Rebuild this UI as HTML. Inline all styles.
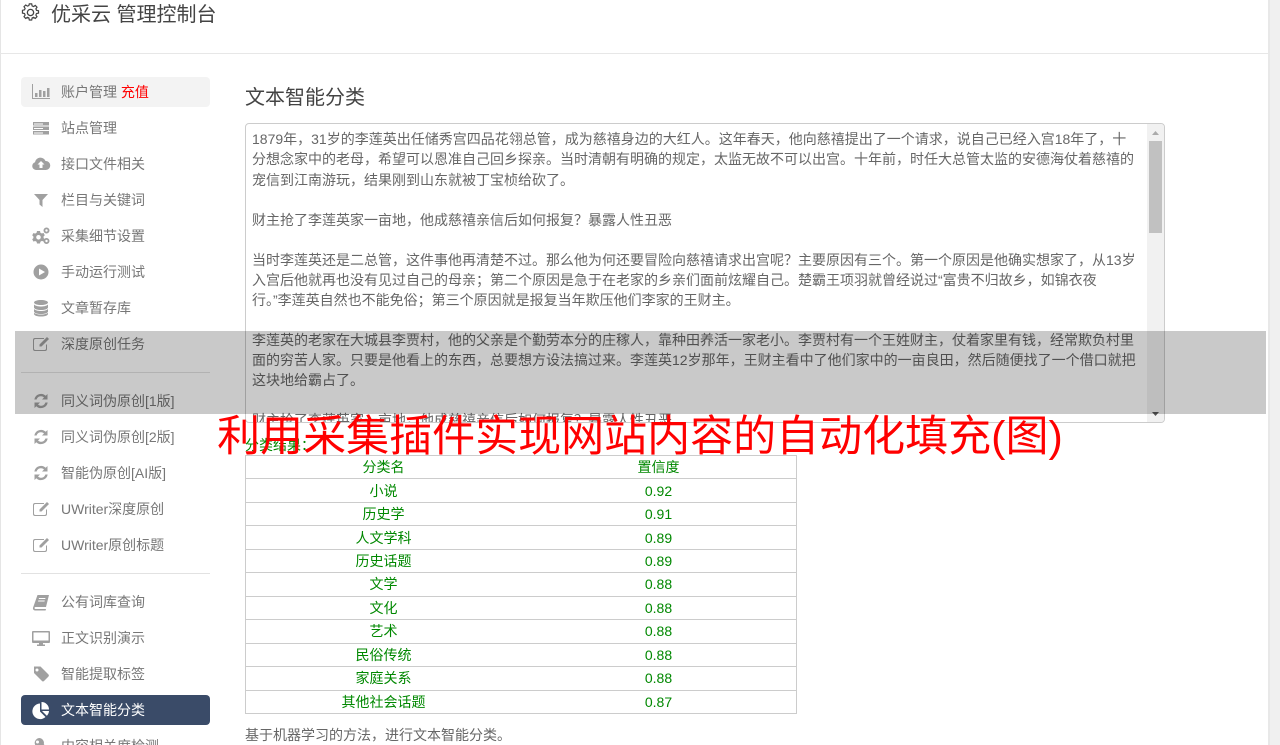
<!DOCTYPE html>
<html lang="zh"><head><meta charset="utf-8"><title>优采云 管理控制台</title>
<style>
*{box-sizing:border-box}
html,body{margin:0;padding:0;width:1280px;height:745px;overflow:hidden;background:#fff}
body{position:relative;font-family:"Liberation Sans","WenQuanYi Zen Hei","Noto Sans CJK TC",sans-serif;font-size:14px;color:#666}
.a{position:absolute;white-space:nowrap}
.it{position:absolute;left:21px;width:189px;height:30px;line-height:30px;padding-left:40px;color:#777;border-radius:4px;white-space:nowrap}
.it svg{position:absolute;left:10px;top:5px;width:20px;height:20px;fill:#a0a0a0}
.on{background:#3a4b68;color:#fff}
.on svg{fill:#fff}
.hv{background:#f3f3f3}
.dv{position:absolute;left:21px;width:189px;height:1px;background:#e2e2e2}
.ta{position:absolute;left:245px;top:123px;width:920px;height:300px;border:1px solid #ccc;border-radius:4px;overflow:hidden;background:#fff}
.ta div{position:absolute;left:6px;white-space:nowrap;line-height:20px;height:20px;color:#666}
table{position:absolute;left:245px;top:455px;width:552px;height:259px;border-collapse:collapse;color:#080;table-layout:fixed;border:1px solid #ccc}
td{border-top:1px solid #ccc;border-bottom:1px solid #ccc;text-align:center;padding:0;height:23.4px;font-size:14px}
</style></head><body>
<div class="a" style="left:0;top:0;width:1px;height:745px;background:#e5e5e5"></div>
<div class="a" style="left:1268px;top:0;width:12px;height:745px;background:#f0f0f0;border-left:2px solid #e8e8e8"></div>
<div class="a" style="left:0;top:53px;width:1268px;height:1px;background:#e7e7e7"></div>

<svg class="a" style="left:21px;top:3px" width="19" height="19" viewBox="0 0 20 20" fill="none" stroke="#444" stroke-width="1.4"><path d="M8.6 1.5h2.8l.5 2.4 1.7.7 2-1.3 2 2-1.3 2 .7 1.7 2.4.5v2.8l-2.4.5-.7 1.7 1.3 2-2 2-2-1.3-1.7.7-.5 2.4H8.600l-.5-2.4-1.700-.7-2 1.300-2-2 1.300-2-.7-1.700-2.400-.5V9l2.400-.5.7-1.700-1.300-2 2-2 2 1.300 1.700-.7z" transform="translate(1 -.4) scale(.9)"/><circle cx="10" cy="10" r="3.300"/></svg>
<div class="a" style="left:51px;top:1px;font-size:20px;line-height:28px;color:#444">优采云 管理控制台</div>

<div class="it hv" style="top:77px"><svg viewBox="0 0 20 20"><path d="M1 2h1v14h17v1H1z"/><path d="M4 11h2.500v4H4zM8 8h2.500v7H8zM12 9h2.500v6H12zM16 6h2.500v9H16z"/></svg>账户管理 <span style="color:#f00">充值</span></div>
<div class="it" style="top:113px"><svg viewBox="0 0 20 20"><path d="M2 4h16v3.500H2zM2 8.500h16V12H2zM2 13h16v3.500H2z"/><path fill="#fff" d="M3 5.500h9v1H3zM3 10h9v1H3zM3 14.500h9v1H3z"/></svg>站点管理</div>
<div class="it" style="top:149px"><svg viewBox="0 0 20 20"><path d="M5 16a4 4 0 0 1-1-7.800A5.500 5.500 0 0 1 14.500 7 4.500 4.500 0 0 1 15 16z"/><path fill="#fff" d="M10 7l3.500 3.500h-2V14h-3v-3.500h-2z"/></svg>接口文件相关</div>
<div class="it" style="top:185px"><svg viewBox="0 0 20 20"><path d="M3 4h14l-5.500 6v7l-3-2.500V10z"/></svg>栏目与关键词</div>
<div class="it" style="top:221px"><svg viewBox="0 0 20 20"><path fill-rule="evenodd" d="M6 5h3l.4 1.700 1.500.8 1.600-.6 1.300 2.300-1.200 1.200v1.600l1.200 1.200-1.300 2.300-1.600-.6-1.500.8L9 17.500H6l-.4-1.700-1.500-.8-1.600.6L1.200 13.300l1.200-1.200v-1.600L1.200 9.300l1.300-2.300 1.600.6 1.500-.8zM7.500 9a2.300 2.300 0 1 0 0 4.600 2.300 2.300 0 0 0 0-4.600z"/><path fill-rule="evenodd" d="M15.500 1.500a3 3 0 1 1 0 6 3 3 0 0 1 0-6zm0 1.800a1.200 1.200 0 1 0 0 2.400 1.200 1.200 0 0 0 0-2.400zM15.500 12a3 3 0 1 1 0 6 3 3 0 0 1 0-6zm0 1.800a1.200 1.200 0 1 0 0 2.400 1.200 1.200 0 0 0 0-2.400z"/></svg>采集细节设置</div>
<div class="it" style="top:257px"><svg viewBox="0 0 20 20"><path fill-rule="evenodd" d="M10 2.500a7.500 7.500 0 1 1 0 15 7.500 7.500 0 0 1 0-15zM8 6.500v7l6-3.500z"/></svg>手动运行测试</div>
<div class="it" style="top:293px"><svg viewBox="0 0 20 20"><path d="M3 4.500C3 3 6.500 2 10 2s7 1 7 2.500S13.500 7 10 7 3 6 3 4.500zM3 6.500C4.500 8 7.500 8.500 10 8.500s5.500-.5 7-2v3c0 1.500-3.500 2.500-7 2.500s-7-1-7-2.500zM3 11c1.500 1.500 4.500 2 7 2s5.500-.5 7-2v2.500C17 15 13.500 16 10 16s-7-1-7-2.500zM3 14.700c1.500 1.400 4.500 1.800 7 1.800s5.500-.4 7-1.800v1.300c0 1.500-3.500 2.500-7 2.500s-7-1-7-2.500z"/></svg>文章暂存库</div>
<div class="it" style="top:329px"><svg viewBox="0 0 20 20"><path d="M4 4h9v1H4.500a1.500 1.500 0 0 0-1.500 1.500v8A1.500 1.500 0 0 0 4.500 16h9a1.500 1.500 0 0 0 1.500-1.500v-4h1v4.500a2 2 0 0 1-2 2H4a2 2 0 0 1-2-2V6a2 2 0 0 1 2-2z"/><path d="M16 3l2 2-7.500 7.500H8.500v-2z"/></svg>深度原创任务</div>
<div class="dv" style="top:372px"></div>
<div class="it" style="top:386px"><svg viewBox="0 0 20 20"><path d="M16.500 3v5.500H11l2-2A4.500 4.500 0 0 0 5.600 8.500H3.300A6.800 6.800 0 0 1 14.700 4.800zM3.500 17v-5.500H9l-2 2a4.500 4.500 0 0 0 7.400-2h2.300a6.800 6.800 0 0 1-11.400 3.700z"/></svg>同义词伪原创[1版]</div>
<div class="it" style="top:422px"><svg viewBox="0 0 20 20"><path d="M16.500 3v5.500H11l2-2A4.500 4.500 0 0 0 5.600 8.500H3.300A6.800 6.800 0 0 1 14.700 4.800zM3.500 17v-5.500H9l-2 2a4.500 4.500 0 0 0 7.400-2h2.300a6.800 6.800 0 0 1-11.400 3.700z"/></svg>同义词伪原创[2版]</div>
<div class="it" style="top:458px"><svg viewBox="0 0 20 20"><path d="M16.500 3v5.500H11l2-2A4.500 4.500 0 0 0 5.600 8.500H3.300A6.800 6.800 0 0 1 14.700 4.800zM3.500 17v-5.500H9l-2 2a4.500 4.500 0 0 0 7.400-2h2.300a6.800 6.800 0 0 1-11.400 3.700z"/></svg>智能伪原创[AI版]</div>
<div class="it" style="top:494px"><svg viewBox="0 0 20 20"><path d="M4 4h9v1H4.500a1.500 1.500 0 0 0-1.500 1.500v8A1.500 1.500 0 0 0 4.500 16h9a1.500 1.500 0 0 0 1.500-1.500v-4h1v4.500a2 2 0 0 1-2 2H4a2 2 0 0 1-2-2V6a2 2 0 0 1 2-2z"/><path d="M16 3l2 2-7.500 7.500H8.500v-2z"/></svg>UWriter深度原创</div>
<div class="it" style="top:530px"><svg viewBox="0 0 20 20"><path d="M4 4h9v1H4.500a1.500 1.500 0 0 0-1.500 1.500v8A1.500 1.500 0 0 0 4.500 16h9a1.500 1.500 0 0 0 1.500-1.500v-4h1v4.500a2 2 0 0 1-2 2H4a2 2 0 0 1-2-2V6a2 2 0 0 1 2-2z"/><path d="M16 3l2 2-7.500 7.500H8.500v-2z"/></svg>UWriter原创标题</div>
<div class="dv" style="top:573px"></div>
<div class="it" style="top:587px"><svg viewBox="0 0 20 20"><path d="M6.500 3H18l-3 12H4.500a1 1 0 0 0 0 2H15l-.4 1.500H4a2.200 2.200 0 0 1-2-2.800z"/><path fill="#fff" d="M8 6h6.500l-.3 1H7.700zM7.300 8.500h6.500l-.3 1H7z"/></svg>公有词库查询</div>
<div class="it" style="top:623px"><svg viewBox="0 0 20 20"><path fill-rule="evenodd" d="M2 3h16a1 1 0 0 1 1 1v10a1 1 0 0 1-1 1h-6v1.500h2V18H6v-1.500h2V15H2a1 1 0 0 1-1-1V4a1 1 0 0 1 1-1zm.5 1.500v8h15v-8z"/></svg>正文识别演示</div>
<div class="it" style="top:659px"><svg viewBox="0 0 20 20"><path fill-rule="evenodd" d="M3 2.500h6.500l8 8a1.500 1.500 0 0 1 0 2L13 17a1.500 1.500 0 0 1-2 0l-8-8zM6 4.500a1.500 1.500 0 1 0 0 3 1.500 1.500 0 0 0 0-3z"/></svg>智能提取标签</div>
<div class="it on" style="top:695px"><svg viewBox="0 0 20 20"><path d="M9 3.500v8l5.500 5.500A7.800 7.800 0 1 1 9 3.500z"/><path d="M10.500 2a7.500 7.500 0 0 1 7.500 7.500h-7.500z"/><path d="M11 11h7a7.500 7.500 0 0 1-2.200 4.800z"/></svg>文本智能分类</div>
<div class="it" style="top:731px"><svg viewBox="0 0 20 20"><path fill-rule="evenodd" d="M8 2a5 5 0 0 1 4.800 6.300L18 13.500V17h-3.500v-2h-2v-2h-2l-1-1A5 5 0 1 1 8 2zM6.500 4.500a1.500 1.500 0 1 0 0 3 1.500 1.500 0 0 0 0-3z"/></svg>内容相关度检测</div>

<div class="a" style="left:245px;top:84px;font-size:20px;line-height:28px;color:#444">文本智能分类</div>

<div class="ta">
<div style="top:5px">1879年，31岁的李莲英出任储秀宫四品花翎总管，成为慈禧身边的大红人。这年春天，他向慈禧提出了一个请求，说自己已经入宫18年了，十</div>
<div style="top:25px">分想念家中的老母，希望可以恩准自己回乡探亲。当时清朝有明确的规定，太监无故不可以出宫。十年前，时任大总管太监的安德海仗着慈禧的</div>
<div style="top:46px">宠信到江南游玩，结果刚到山东就被丁宝桢给砍了。</div>
<div style="top:86px">财主抢了李莲英家一亩地，他成慈禧亲信后如何报复？暴露人性丑恶</div>
<div style="top:126px">当时李莲英还是二总管，这件事他再清楚不过。那么他为何还要冒险向慈禧请求出宫呢？主要原因有三个。第一个原因是他确实想家了，从13岁</div>
<div style="top:146px">入宫后他就再也没有见过自己的母亲；第二个原因是急于在老家的乡亲们面前炫耀自己。楚霸王项羽就曾经说过“富贵不归故乡，如锦衣夜</div>
<div style="top:166px">行。”李莲英自然也不能免俗；第三个原因就是报复当年欺压他们李家的王财主。</div>
<div style="top:206px">李莲英的老家在大城县李贾村，他的父亲是个勤劳本分的庄稼人，靠种田养活一家老小。李贾村有一个王姓财主，仗着家里有钱，经常欺负村里</div>
<div style="top:226px">面的穷苦人家。只要是他看上的东西，总要想方设法搞过来。李莲英12岁那年，王财主看中了他们家中的一亩良田，然后随便找了一个借口就把</div>
<div style="top:246px">这块地给霸占了。</div>
<div style="top:286px">财主抢了李莲英家一亩地，他成慈禧亲信后如何报复？暴露人性丑恶</div>
<div style="left:901px;top:0;width:17px;height:298px;background:#f1f1f1"></div>
<div style="left:903px;top:17px;width:13px;height:92px;background:#c1c1c1"></div>
<svg style="position:absolute;left:901px;top:0" width="17" height="298"><path d="M5 11h7l-3.500-4z" fill="#aaa"/><path d="M5 288h7l-3.500 4z" fill="#555"/></svg>
</div>

<div class="a" style="left:245px;top:435px;line-height:20px;color:#080">分类结果：</div>
<table>
<tr><td>分类名</td><td>置信度</td></tr>
<tr><td>小说</td><td>0.92</td></tr>
<tr><td>历史学</td><td>0.91</td></tr>
<tr><td>人文学科</td><td>0.89</td></tr>
<tr><td>历史话题</td><td>0.89</td></tr>
<tr><td>文学</td><td>0.88</td></tr>
<tr><td>文化</td><td>0.88</td></tr>
<tr><td>艺术</td><td>0.88</td></tr>
<tr><td>民俗传统</td><td>0.88</td></tr>
<tr><td>家庭关系</td><td>0.88</td></tr>
<tr><td>其他社会话题</td><td>0.87</td></tr>
</table>
<div class="a" style="left:245px;top:725px;line-height:20px;color:#666">基于机器学习的方法，进行文本智能分类。</div>

<div class="a" style="left:15px;top:331px;width:1251px;height:83px;background:rgba(0,0,0,.21)"></div>
<div class="a" style="left:0;top:410px;width:1280px;text-align:center;font-size:43px;line-height:54px;color:#f00">利用采集插件实现网站内容的自动化填充(图)</div>
</body></html>
